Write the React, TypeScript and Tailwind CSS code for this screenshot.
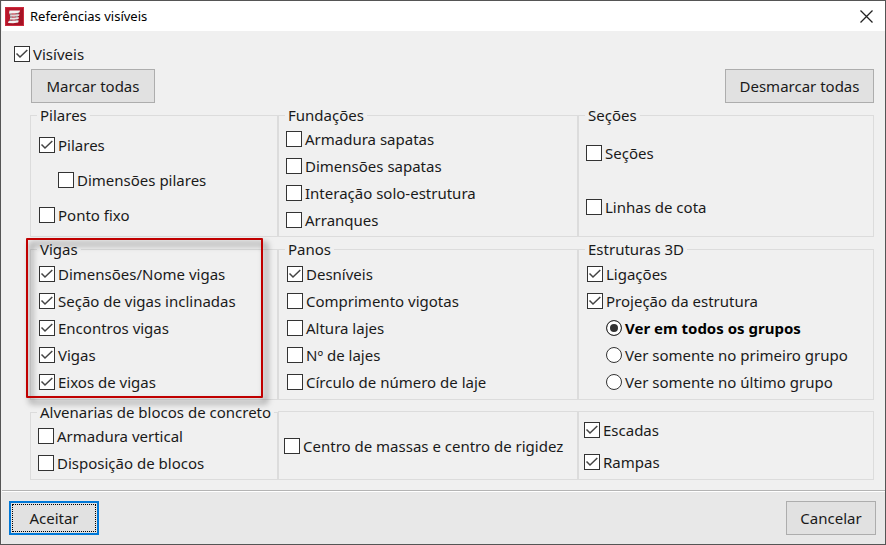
import { useState } from "react"
import type { ReactNode } from "react"
import clsx from "clsx"

function Check({ label, checked = false, className }: { label: string; checked?: boolean; className?: string }) {
  return (
    <label className={clsx("flex h-[27px] items-center gap-[3px] whitespace-nowrap", className)}>
      <span className="grid shrink-0">
        <input
          type="checkbox"
          defaultChecked={checked}
          className="peer col-start-1 row-start-1 size-4 appearance-none border border-[#333] bg-white outline-none"
        />
        <svg
          viewBox="0 0 16 16"
          className="pointer-events-none invisible col-start-1 row-start-1 size-4 peer-checked:visible"
          fill="none"
          stroke="#444"
          strokeWidth="1.5"
        >
          <path d="M2.5 7.5 L6 11 L13.3 4" />
        </svg>
      </span>
      {label}
    </label>
  )
}

function Group({ title, className, children }: { title: string; className: string; children: ReactNode }) {
  return (
    <fieldset className="min-w-0 border border-[#dcdcdc]">
      <legend className="ml-[6px] px-[3px] leading-[18px]">{title}</legend>
      <div className={clsx("flex flex-col", className)}>{children}</div>
    </fieldset>
  )
}

function Logo() {
  return (
    <svg viewBox="0 0 19 19" className="size-[19px]" aria-hidden="true">
      <rect width="19" height="19" fill="#b8162a" />
      <path d="M0 19 H19 V0 Z" fill="#8f0f1e" opacity="0.45" />
      <rect x="0.5" y="0.5" width="18" height="18" fill="none" stroke="#cc2b3d" />
      <path d="M5.5 5 V8 M12.5 5 V8 M6 9 V12 M12 9 V12 M5.5 12.5 L5 15 M12 12.5 V15" stroke="#857578" strokeWidth="2" />
      <path d="M4.5 3.6 H15 L14.4 5.6 L10 6.4 H4 Z" fill="#f2f2f2" />
      <path d="M5.5 7.6 L14.5 7.2 L14 9 L9 9.8 L4.8 9.2 Z" fill="#dcd6d7" />
      <path d="M5 10.8 L14 10.2 L13.5 12 L9 12.8 L5 12.4 Z" fill="#e8e4e4" />
      <path d="M3.5 14.2 L8 13.6 H13.8 L13.2 15.4 L8 16.2 L3 16 Z" fill="#f2f2f2" />
    </svg>
  )
}

const views = ["Ver em todos os grupos", "Ver somente no primeiro grupo", "Ver somente no último grupo"]

const button = "h-[34px] border border-[#adadad] bg-[#e1e1e1] pb-px text-center"

export default function App() {
  const [view, setView] = useState(views[0])

  return (
    <div className="flex min-h-screen flex-col border border-[#555] bg-[#f0f0f0] pl-px font-['Noto_Sans',sans-serif] text-[15px] leading-5 text-[#1a1a1a]">
      <header className="flex h-[30px] items-center bg-white pr-3 pl-[3px] text-black">
        <Logo />
        <h1 className="ml-[6px] text-[13px]">Referências visíveis</h1>
        <button type="button" aria-label="Fechar" className="ml-auto">
          <svg viewBox="0 0 13 13" className="size-[13px]" stroke="#222" strokeWidth="1.3">
            <path d="M0.5 0.5 L12.5 12.5 M12.5 0.5 L0.5 12.5" />
          </svg>
        </button>
      </header>

      <main className="flex-1 pt-[9px] pr-[11px] pb-[10px] pl-3">
        <Check label="Visíveis" checked />
        <div className="mt-[2px] flex justify-between pl-[17px]">
          <button type="button" className={clsx(button, "w-[124px]")}>Marcar todas</button>
          <button type="button" className={clsx(button, "w-[149px]")}>Desmarcar todas</button>
        </div>

        <div className="mt-[3px] grid grid-cols-[248fr_300fr_296fr] gap-y-[3px] pl-4">
          <Group title="Pilares" className="gap-2 pt-[7px] pl-2">
            <Check label="Pilares" checked />
            <Check label="Dimensões pilares" className="pl-[19px]" />
            <Check label="Ponto fixo" />
          </Group>
          <Group title="Fundações" className="pt-px pb-[3px] pl-[7px]">
            <Check label="Armadura sapatas" />
            <Check label="Dimensões sapatas" />
            <Check label="Interação solo-estrutura" />
            <Check label="Arranques" />
          </Group>
          <Group title="Seções" className="gap-[27px] pt-[15px] pl-[7px]">
            <Check label="Seções" />
            <Check label="Linhas de cota" />
          </Group>

          <div className="relative grid">
            <Group title="Vigas" className="pt-[2px] pb-1 pl-2">
              <Check label="Dimensões/Nome vigas" checked />
              <Check label="Seção de vigas inclinadas" checked />
              <Check label="Encontros vigas" checked />
              <Check label="Vigas" checked />
              <Check label="Eixos de vigas" checked />
            </Group>
            {/* red frame over the beams group */}
            <div className="pointer-events-none absolute -top-[2px] right-[15px] bottom-[2px] -left-1 rounded-[1px] border-2 border-[#c00000] drop-shadow-[4px_5px_3px_rgba(0,0,0,0.6)]" />
          </div>
          <Group title="Panos" className="pt-[2px] pb-1 pl-2">
            <Check label="Desníveis" checked />
            <Check label="Comprimento vigotas" />
            <Check label="Altura lajes" />
            <Check label="Nº de lajes" />
            <Check label="Círculo de número de laje" />
          </Group>
          <Group title="Estruturas 3D" className="pt-[2px] pb-1 pl-2">
            <Check label="Ligações" checked />
            <Check label="Projeção da estrutura" checked />
            {views.map((name) => (
              <label
                key={name}
                className={clsx(
                  "flex h-[27px] items-center gap-[3px] pl-[19px] whitespace-nowrap",
                  view === name && "font-bold text-black",
                )}
              >
                <input
                  type="radio"
                  name="view"
                  checked={view === name}
                  onChange={() => setView(name)}
                  className="size-4 shrink-0 appearance-none rounded-full border border-[#333] bg-white checked:bg-[#333] checked:shadow-[inset_0_0_0_3px_white]"
                />
                {name}
              </label>
            ))}
          </Group>

          <Group title="Alvenarias de blocos de concreto" className="pt-px pb-[3px] pl-[7px]">
            <Check label="Armadura vertical" />
            <Check label="Disposição de blocos" />
          </Group>
          <div className="mt-2 flex items-center border border-[#dcdcdc] pl-[5px]">
            <Check label="Centro de massas e centro de rigidez" />
          </div>
          <div className="mt-2 flex flex-col justify-center gap-[5px] border border-[#dcdcdc] pl-[5px]">
            <Check label="Escadas" checked />
            <Check label="Rampas" checked />
          </div>
        </div>
      </main>

      <footer className="flex justify-between border-t border-[#b4b4b4] bg-[#e8e8e8] pt-[10px] pr-[9px] pb-[9px] pl-[7px] shadow-[inset_0_1px_white]">
        <button type="button" className="h-[34px] w-[90px] border-2 border-[#0078d7] bg-[#e1e1e1] p-px">
          <span className="flex h-full items-center justify-center border border-dotted border-black">Aceitar</span>
        </button>
        <button type="button" className={clsx(button, "w-[90px]")}>Cancelar</button>
      </footer>
    </div>
  )
}
